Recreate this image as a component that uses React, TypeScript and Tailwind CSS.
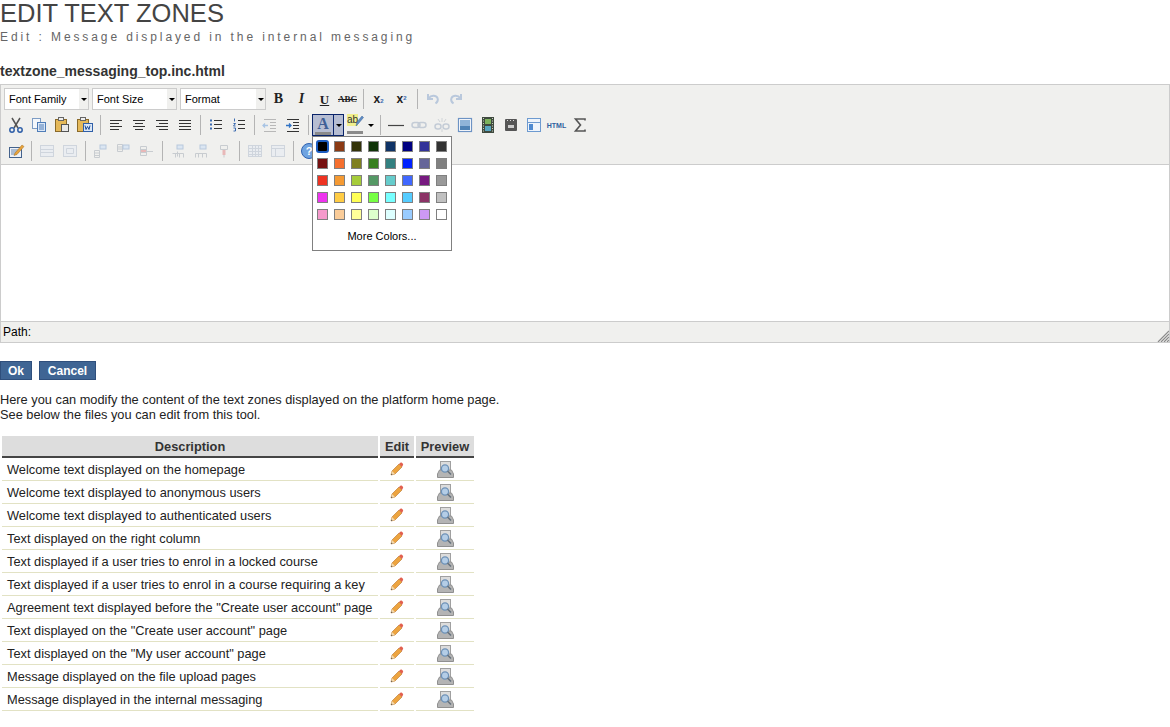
import type { ReactNode } from "react";

const colors = [
  "#000000", "#8b3a14", "#333309", "#0f3308", "#0f3366", "#000080", "#333399", "#333333",
  "#771111", "#f56f2e", "#808020", "#388020", "#338080", "#0022ff", "#666699", "#808080",
  "#ee3322", "#f59a33", "#a6cc3a", "#559966", "#66cccc", "#4068ff", "#771a80", "#999999",
  "#ee33ee", "#ffcc44", "#ffff55", "#77ff44", "#77ffff", "#55ccff", "#8b3366", "#c0c0c0",
  "#f59acc", "#facc99", "#ffff99", "#ddffcc", "#ddffff", "#99ccff", "#cc99f5", "#ffffff",
];

const rows = [
  "Welcome text displayed on the homepage",
  "Welcome text displayed to anonymous users",
  "Welcome text displayed to authenticated users",
  "Text displayed on the right column",
  "Text displayed if a user tries to enrol in a locked course",
  "Text displayed if a user tries to enrol in a course requiring a key",
  'Agreement text displayed before the "Create user account" page',
  'Text displayed on the "Create user account" page',
  'Text displayed on the "My user account" page',
  "Message displayed on the file upload pages",
  "Message displayed in the internal messaging",
];

const Ico = ({ children }: { children: ReactNode }) => (
  <svg width="20" height="20" viewBox="0 0 20 20" fill="none">
    {children}
  </svg>
);

const Btn = ({ children }: { children: ReactNode }) => (
  <div className="flex h-[26px] w-[23px] shrink-0 items-center justify-center">{children}</div>
);

const Sep = () => (
  <div className="flex h-[26px] w-2 shrink-0 items-center justify-center">
    <div className="h-5 w-px bg-[#b4b4b4]" />
  </div>
);

const Lines = ({ d, color = "#333" }: { d: string; color?: string }) => (
  <Ico>
    <path d={d} stroke={color} strokeWidth="1" />
  </Ico>
);

const Select = ({ label, width }: { label: string; width: string }) => (
  <div className={`flex h-[22px] shrink-0 border border-[#cccccc] bg-white ${width}`}>
    <div className="flex-1 pl-1 text-[11px] leading-[20px] text-black">{label}</div>
    <div className="flex w-[9px] items-center justify-center bg-[#f0f0ee] pl-px">
      <div className="h-0 w-0 border-x-[3px] border-t-[3px] border-x-transparent border-t-black" />
    </div>
  </div>
);

const Letter = ({ children, className }: { children: ReactNode; className: string }) => (
  <span className={`font-['Liberation_Serif',serif] font-bold leading-none ${className}`}>{children}</span>
);

const DisabledTable = ({ d }: { d: string }) => (
  <Ico>
    <g opacity="0.75">
      <rect x="3.5" y="4.5" width="13" height="11" fill="#e8ecf2" stroke="#c4ccd8" />
      <path d={d} stroke="#c4ccd8" />
    </g>
  </Ico>
);

const DisabledArrow = ({ d, accent }: { d: string; accent: string }) => (
  <Ico>
    <path d={d} stroke="#c8ccd0" />
    <rect x="9" y="4" width="6" height="4" fill={accent} stroke="#b8c8dc" />
  </Ico>
);

const Pencil = () => (
  <svg width="14" height="14" viewBox="0 0 14 14">
    <path d="M1 13l1-4 7-7 3 3-7 7z" fill="#eda43f" stroke="#b9742a" strokeWidth="0.6" />
    <path d="M9 2l1.4-1.3c.5-.4 1-.4 1.5 0l1 1c.4.5.4 1 0 1.5L12 5z" fill="#e2604f" />
    <path d="M1 13l1-4 3 3z" fill="#f3d9ae" />
    <path d="M1 13l.4-1.6 1.2 1.2z" fill="#444" />
  </svg>
);

const PreviewIcon = () => (
  <svg width="17" height="17" viewBox="0 0 17 17">
    <rect x="3.5" y="0.5" width="10" height="10" fill="#dcdcdc" stroke="#a0a0a0" />
    <path d="M0.5 13l2-4h12l2 4v3.500h-16z" fill="#b4b4b4" stroke="#909090" />
    <circle cx="8" cy="7.500" r="3.600" fill="#b4cde6" stroke="#6e92b8" strokeWidth="1.300" />
    <path d="M10.500 10l3.500 3.500" stroke="#66727e" strokeWidth="1.600" />
  </svg>
);

const App = () => {
  return (
    <div className="min-h-[727px] bg-white font-['Liberation_Sans',Arial,sans-serif] text-[12.8px] text-[#222]">
      <h1 className="h-[28px] text-[25.5px] leading-[27px] font-normal text-[#444444]">EDIT TEXT ZONES</h1>
      <p className="h-[17px] text-[12px] leading-[18px] tracking-[2.9px] text-[#666666]">
        Edit : Message displayed in the internal messaging
      </p>
      <h2 className="mt-[17px] h-[22px] text-[14px] leading-[18px] font-bold text-[#333333]">
        textzone_messaging_top.inc.html
      </h2>

      {/* Editor */}
      <div className="relative h-[259px] border border-[#cccccc] bg-white">
        <div className="h-[80px] border-b border-[#cccccc] bg-[#f0f0ee] pt-px">
          <div className="flex h-[26px] items-center pl-[3px]">
            <div className="mr-px flex gap-[3px]">
              <Select label="Font Family" width="w-[85px]" />
              <Select label="Font Size" width="w-[85px]" />
              <Select label="Format" width="w-[86px]" />
            </div>
            <Btn><Letter className="text-[14px] text-[#222]">B</Letter></Btn>
            <Btn><Letter className="text-[14px] italic text-[#222]">I</Letter></Btn>
            <Btn><Letter className="text-[13px] text-[#222] underline">U</Letter></Btn>
            <Btn><Letter className="text-[9px] text-[#222] line-through">ABC</Letter></Btn>
            <Sep />
            <Btn>
              <span className="font-['Liberation_Sans',sans-serif] text-[12px] leading-none font-bold text-[#222]">
                x<span className="text-[6px] text-[#3a6ab0]">2</span>
              </span>
            </Btn>
            <Btn>
              <span className="font-['Liberation_Sans',sans-serif] text-[12px] leading-none font-bold text-[#222]">
                x<sup className="text-[6px] text-[#3a6ab0]">2</sup>
              </span>
            </Btn>
            <Sep />
            <Btn>
              <Ico><path d="M5 5v5h5M5.5 9.5C8 6 13 6 14.5 9c1 2.500 0 4-2 5.500" stroke="#b9c8dc" strokeWidth="2" /></Ico>
            </Btn>
            <Btn>
              <Ico><path d="M15 5v5h-5M14.500 9.500C12 6 7 6 5.500 9c-1 2.500 0 4 2 5.500" stroke="#b9c8dc" strokeWidth="2" /></Ico>
            </Btn>
          </div>

          <div className="flex h-[26px] items-center pl-[3px]">
            <Btn>
              <Ico>
                <path d="M6 3l6 10M14 3L8 13" stroke="#555" strokeWidth="1.500" />
                <circle cx="6" cy="15" r="2.200" stroke="#2f5fa8" strokeWidth="1.500" />
                <circle cx="14" cy="15" r="2.200" stroke="#2f5fa8" strokeWidth="1.500" />
              </Ico>
            </Btn>
            <Btn>
              <Ico>
                <rect x="3.500" y="3.500" width="8" height="10" fill="#f4f7fb" stroke="#7d9cc4" />
                <rect x="8.500" y="7.500" width="8" height="9" fill="#dbe7f6" stroke="#4f7db8" />
                <path d="M10 10h5M10 12h5M10 14h5" stroke="#4f7db8" />
              </Ico>
            </Btn>
            <Btn>
              <Ico>
                <rect x="3.500" y="4.500" width="11" height="12" fill="#e5b95a" stroke="#8a6a2a" />
                <rect x="6.500" y="2.500" width="5" height="3" fill="#eee" stroke="#666" />
                <rect x="9.500" y="9.500" width="7" height="7" fill="#e9e9e9" stroke="#555" />
              </Ico>
            </Btn>
            <Btn>
              <Ico>
                <rect x="2.500" y="4.500" width="11" height="12" fill="#e5b95a" stroke="#8a6a2a" />
                <rect x="5.500" y="2.500" width="5" height="3" fill="#eee" stroke="#666" />
                <rect x="8.500" y="8.500" width="9" height="8" fill="#dbe7f6" stroke="#2f5fa8" />
                <path d="M10 10.500l1 4 1.500-3 1.500 3 1-4" stroke="#1d4d9a" />
              </Ico>
            </Btn>
            <Sep />
            <Btn><Lines d="M4 5.500h12M4 8.500h9M4 11.500h12M4 14.500h9" /></Btn>
            <Btn><Lines d="M4 5.500h12M6 8.500h8M4 11.500h12M6 14.500h8" /></Btn>
            <Btn><Lines d="M4 5.500h12M7 8.500h9M4 11.500h12M7 14.500h9" /></Btn>
            <Btn><Lines d="M4 5.500h12M4 8.500h12M4 11.500h12M4 14.500h12" /></Btn>
            <Sep />
            <Btn>
              <Ico>
                <path d="M8 5.500h8M8 9.500h8M8 13.500h8" stroke="#333" />
                <path d="M4 4.500h2v2H4zM4 8.500h2v2H4zM4 12.500h2v2H4z" fill="#3a6ab0" />
              </Ico>
            </Btn>
            <Btn>
              <Ico>
                <path d="M9 5.500h7M9 9.500h7M9 13.500h7" stroke="#333" />
                <path d="M5.500 3.500v3M4.500 8.500h2l-2 2.500h2M4.500 13h2v3h-2" stroke="#3a6ab0" />
              </Ico>
            </Btn>
            <Sep />
            <Btn>
              <Ico>
                <path d="M4 4.500h12M10 7.500h6M10 10.500h6M10 13.500h6M4 16.500h12" stroke="#b8b8b8" />
                <path d="M8 10.500H3M5 8.500l-2 2 2 2" stroke="#a8c4e4" strokeWidth="1.300" />
              </Ico>
            </Btn>
            <Btn>
              <Ico>
                <path d="M4 4.500h12M10 7.500h6M10 10.500h6M10 13.500h6M4 16.500h12" stroke="#333" />
                <path d="M3 10.500h5M6 8.500l2 2-2 2" stroke="#2f72c4" strokeWidth="1.300" />
              </Ico>
            </Btn>
            <Sep />
            {/* Open split button for the text colour */}
            <div className="flex h-[22px] w-8 shrink-0">
              <div className="flex w-[22px] flex-col items-center border border-[#0a246a] bg-[#b6bdd2]">
                <span className="mt-px font-['Liberation_Serif',serif] text-[16px] leading-[15px] font-bold text-[#3f5f96]">A</span>
                <div className="mt-px h-[3px] w-4 bg-[#8a8a8a]" />
              </div>
              <div className="-ml-px flex w-[11px] items-center justify-center border border-[#0a246a] bg-[#b6bdd2]">
                <div className="h-0 w-0 border-x-[3px] border-t-[3px] border-x-transparent border-t-black" />
              </div>
            </div>
            <div className="flex h-[22px] w-8 shrink-0">
              <div className="flex w-[22px] flex-col items-center">
                <div className="relative h-[15px] w-[18px]">
                  <span className="absolute top-0 left-px bg-[#f1ef8c] font-['Liberation_Sans',sans-serif] text-[10px] leading-[12px] text-[#333]">ab</span>
                  <svg className="absolute top-px right-0" width="9" height="12" viewBox="0 0 9 12">
                    <path d="M1 11l1-4 5-6 1.500 1.500-5 6z" fill="#5e8cc4" stroke="#3b6296" strokeWidth="0.500" />
                  </svg>
                </div>
                <div className="mt-[2px] h-[3px] w-4 bg-[#8a8a8a]" />
              </div>
              <div className="flex w-[10px] items-center justify-center">
                <div className="h-0 w-0 border-x-[3px] border-t-[3px] border-x-transparent border-t-black" />
              </div>
            </div>
            <Sep />
            <Btn><Ico><path d="M2 10.500h16" stroke="#444" strokeWidth="1.200" /></Ico></Btn>
            <Btn>
              <Ico>
                <rect x="3" y="7.500" width="8" height="5" rx="2.500" stroke="#c4ccd6" strokeWidth="1.500" />
                <rect x="9" y="7.500" width="8" height="5" rx="2.500" stroke="#c4ccd6" strokeWidth="1.500" />
              </Ico>
            </Btn>
            <Btn>
              <Ico>
                <rect x="3" y="9" width="6" height="5" rx="2.500" stroke="#c4ccd6" strokeWidth="1.500" />
                <rect x="11" y="9" width="6" height="5" rx="2.500" stroke="#c4ccd6" strokeWidth="1.500" />
                <path d="M10 3v4M6 4l2 3M14 4l-2 3M10 14v3" stroke="#d0d4d8" />
              </Ico>
            </Btn>
            <Btn>
              <Ico>
                <rect x="3.500" y="3.500" width="13" height="13" fill="#fff" stroke="#6d93c4" strokeWidth="1.200" />
                <rect x="5" y="5" width="10" height="10" fill="#8fb4d8" />
                <rect x="5" y="11" width="10" height="4" fill="#4f83b5" />
              </Ico>
            </Btn>
            <Btn>
              <Ico>
                <rect x="4" y="2" width="12" height="16" fill="#3f4a3f" />
                <rect x="7" y="4" width="6" height="5" fill="#7cb35c" />
                <rect x="7" y="11" width="6" height="5" fill="#58a6c0" />
                <path d="M5.500 3v14M14.500 3v14" stroke="#c8d0c0" strokeDasharray="1 1.500" />
              </Ico>
            </Btn>
            <Btn>
              <Ico>
                <rect x="4" y="4" width="12" height="12" rx="1" fill="#555" />
                <path d="M6 5.500h1M9 5.500h1M12 5.500h1" stroke="#ddd" />
                <rect x="7" y="10" width="6" height="3" fill="#ccc" />
              </Ico>
            </Btn>
            <Btn>
              <Ico>
                <rect x="3.500" y="3.500" width="13" height="13" fill="#eef4fb" stroke="#6d9ad0" />
                <path d="M4 7.500h12" stroke="#6d9ad0" />
                <rect x="5" y="9" width="4" height="6" fill="#4f8ad0" />
              </Ico>
            </Btn>
            <Btn>
              <span className="text-[7px] leading-none font-bold text-[#2f5f9e]">HTML</span>
            </Btn>
            <Btn>
              <Ico><path d="M15 5.500V4H5.500L10.500 10l-5 6H15v-1.500" stroke="#555" strokeWidth="1.600" /></Ico>
            </Btn>
          </div>

          <div className="flex h-[26px] items-center pl-[3px]">
            <Btn>
              <Ico>
                <rect x="3.500" y="6.500" width="12" height="10" fill="#eef2f8" stroke="#44628c" />
                <path d="M5 9h8M5 11h8M5 13h6" stroke="#6b87ad" />
                <path d="M9 12l7-8 2 1.500-7 8-3 1z" fill="#e8a33c" stroke="#a56e1e" strokeWidth="0.500" />
              </Ico>
            </Btn>
            <Sep />
            <Btn><DisabledTable d="M4 8.500h12M4 11.500h12" /></Btn>
            <Btn><DisabledTable d="M6.500 7.500h7v5h-7z" /></Btn>
            <Sep />
            <Btn><DisabledArrow d="M3.500 9.500h5v7h-5zM3.500 12h5M3.500 14.500h5" accent="#dbe6f2" /></Btn>
            <Btn><DisabledArrow d="M3.500 3.500h5v7h-5zM3.500 6h5M3.500 8h5" accent="#dbe6f2" /></Btn>
            <Btn>
              <Ico>
                <path d="M3.500 5.500h6v9h-6zM3.500 8.500h6M3.500 11.500h6M10 10.500h6" stroke="#c8ccd0" />
                <rect x="4" y="9" width="5" height="2" fill="#e8b8b8" />
              </Ico>
            </Btn>
            <Sep />
            <Btn><DisabledArrow d="M9.500 10.500v5M4.500 12.500h11v4M7.500 12.500v4M11.500 12.500v4" accent="#dbe6f2" /></Btn>
            <Btn><DisabledArrow d="M4.500 12.500h11v4M7.500 12.500v4M11.500 12.500v4M4.500 12.500v4" accent="#dbe6f2" /></Btn>
            <Btn>
              <Ico>
                <path d="M6.500 4.500v4h7v-4zM10 8.500v8" stroke="#c8ccd0" />
                <rect x="8.500" y="9" width="3" height="5" fill="#e8b8b8" />
              </Ico>
            </Btn>
            <Sep />
            <Btn><DisabledTable d="M4 7.500h12M4 10.500h12M4 13.500h12M7.500 5v11M10.500 5v11M13.500 5v11" /></Btn>
            <Btn><DisabledTable d="M4 7.500h12M7.500 8v7" /></Btn>
            <Sep />
            <Btn>
              <Ico>
                <circle cx="10" cy="10" r="7.500" fill="#6fa3e0" stroke="#2f62b0" />
                <text x="10" y="14" textAnchor="middle" fontSize="11" fontWeight="700" fill="#fff" fontFamily="Liberation Sans">?</text>
              </Ico>
            </Btn>
          </div>
        </div>

        <div className="h-[156px] bg-white" />

        <div className="relative h-[21px] border-t border-[#cccccc] bg-[#f0f0ee] pl-[2px] text-[12px] leading-[20px] text-black">
          Path:
          <svg className="absolute right-0 bottom-0" width="12" height="12" viewBox="0 0 12 12">
            <path d="M12 1L1 12M12 4l-8 8M12 7l-5 5M12 10l-2 2" stroke="#8a8a8a" strokeWidth="1.200" />
          </svg>
        </div>

        {/* Colour picker menu */}
        <div className="absolute top-[51px] left-[311px] h-[115px] w-[140px] border border-[#808080] bg-white">
          <div className="grid grid-cols-[repeat(8,17px)] pt-[1px] pl-[1px]">
            {colors.map((color, index) => (
              <div className="flex h-[17px] w-[17px] items-center justify-center" key={index}>
                {index === 0 ? (
                  <div className="h-[13px] w-[13px] rounded-[3px] border-2 border-[#1c5cc0] bg-black" />
                ) : (
                  <div className="h-[11px] w-[11px] border border-[#808080]" style={{ backgroundColor: color }} />
                )}
              </div>
            ))}
          </div>
          <div className="mt-[3px] text-center text-[11px] leading-[20px] text-black">More Colors...</div>
        </div>
      </div>

      <div className="mt-[18px] flex gap-[7px]">
        <button className="h-[19px] w-8 border border-[#2f4f7c] bg-[#3f6594] text-[12px] leading-[16px] font-bold text-white">Ok</button>
        <button className="h-[19px] w-[57px] border border-[#2f4f7c] bg-[#3f6594] text-[12px] leading-[16px] font-bold text-white">Cancel</button>
      </div>

      <p className="mt-[12px] leading-[15px]">
        Here you can modify the content of the text zones displayed on the platform home page.
        <br />
        See below the files you can edit from this tool.
      </p>

      <table className="mt-[14px] w-[476px] table-fixed border-separate border-spacing-x-[2px] border-spacing-y-0">
        <thead>
          <tr className="font-bold text-[#333]">
            <th className="h-[21px] border-b-2 border-[#444] bg-[#dddddd] p-0 pt-px text-center">Description</th>
            <th className="w-[34px] border-b-2 border-[#444] bg-[#dddddd] p-0 pt-px text-center">Edit</th>
            <th className="w-[58px] border-b-2 border-[#444] bg-[#dddddd] p-0 pt-px text-center">Preview</th>
          </tr>
        </thead>
        <tbody>
          {rows.map((row) => (
            <tr key={row}>
              <td className="h-[23px] border-b border-[#e2e2c4] p-0 pt-px pl-[5px]">{row}</td>
              <td className="border-b border-[#e2e2c4] p-0">
                <div className="flex justify-center"><Pencil /></div>
              </td>
              <td className="border-b border-[#e2e2c4] p-0">
                <div className="flex justify-center"><PreviewIcon /></div>
              </td>
            </tr>
          ))}
        </tbody>
      </table>
    </div>
  );
};

export default App;
